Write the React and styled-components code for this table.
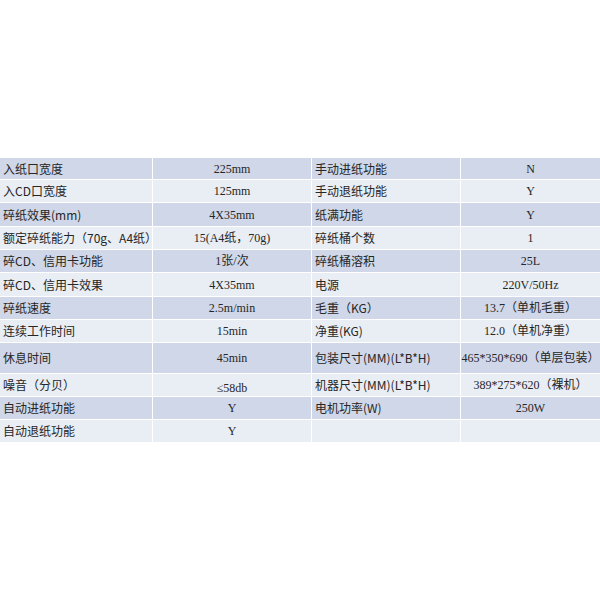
import React from "react";
import styled, { createGlobalStyle } from "styled-components";

const Global = createGlobalStyle`
  html, body { margin: 0; padding: 0; background: #ffffff; }
  body { width: 600px; height: 600px; overflow: hidden; }
`;

const Page = styled.div`
  padding-top: 158px;
  width: 600px;
`;

const Table = styled.div`
  display: grid;
  grid-template-columns: 152px 158px 148px 1fr;
  column-gap: 1px;
  row-gap: 1px;
  background: #ffffff;
  font-family: "Liberation Serif", "Noto Sans CJK SC", serif;
  font-size: 12px;
  color: #262626;
`;

const Cell = styled.div`
  height: ${(p) => p.$h}px;
  background: ${(p) => (p.$dark ? "#d0d7e8" : "#e9edf4")};
  display: flex;
  align-items: ${(p) => (p.$low ? "flex-end" : "center")};
  justify-content: ${(p) => (p.$center ? "center" : "flex-start")};
  padding: ${(p) => (p.$center ? "0" : "0 0 0 3px")};
  padding-bottom: ${(p) => (p.$low ? "2px" : "0")};
  box-sizing: border-box;
  white-space: nowrap;
  line-height: 1;
`;

const Label = styled.span`
  font-family: "Noto Sans CJK SC", "Liberation Sans", sans-serif;
  font-size: 12px;
`;

const rows = [
  ["入纸口宽度", "225mm", "手动进纸功能", "N", 21],
  ["入CD口宽度", "125mm", "手动退纸功能", "Y", 22],
  ["碎纸效果(mm)", "4X35mm", "纸满功能", "Y", 23],
  ["额定碎纸能力（70g、A4纸）", "15(A4纸，70g)", "碎纸桶个数", "1", 22],
  ["碎CD、信用卡功能", "1张/次", "碎纸桶溶积", "25L", 22],
  ["碎CD、信用卡效果", "4X35mm", "电源", "220V/50Hz", 23],
  ["碎纸速度", "2.5m/min", "毛重（KG）", "13.7（单机毛重）", 22],
  ["连续工作时间", "15min", "净重(KG)", "12.0（单机净重）", 22],
  ["休息时间", "45min", "包装尺寸(MM)(L*B*H)", "465*350*690（单层包装）", 30],
  ["噪音（分贝）", "≤58db", "机器尺寸(MM)(L*B*H)", "389*275*620（裸机）", 22],
  ["自动进纸功能", "Y", "电机功率(W)", "250W", 22],
  ["自动退纸功能", "Y", "", "", 22],
];

export default function App() {
  return (
    <>
      <Global />
      <Page>
        <Table>
          {rows.map(([a, b, c, d, h], i) => {
            const dark = i % 2 === 0;
            return (
              <React.Fragment key={i}>
                <Cell $h={h} $dark={dark}>
                  <Label>{a}</Label>
                </Cell>
                <Cell $h={h} $dark={dark} $center $low={b === "≤58db"}>
                  {b}
                </Cell>
                <Cell $h={h} $dark={dark}>
                  <Label>{c}</Label>
                </Cell>
                <Cell $h={h} $dark={dark} $center>
                  {d}
                </Cell>
              </React.Fragment>
            );
          })}
        </Table>
      </Page>
    </>
  );
}
